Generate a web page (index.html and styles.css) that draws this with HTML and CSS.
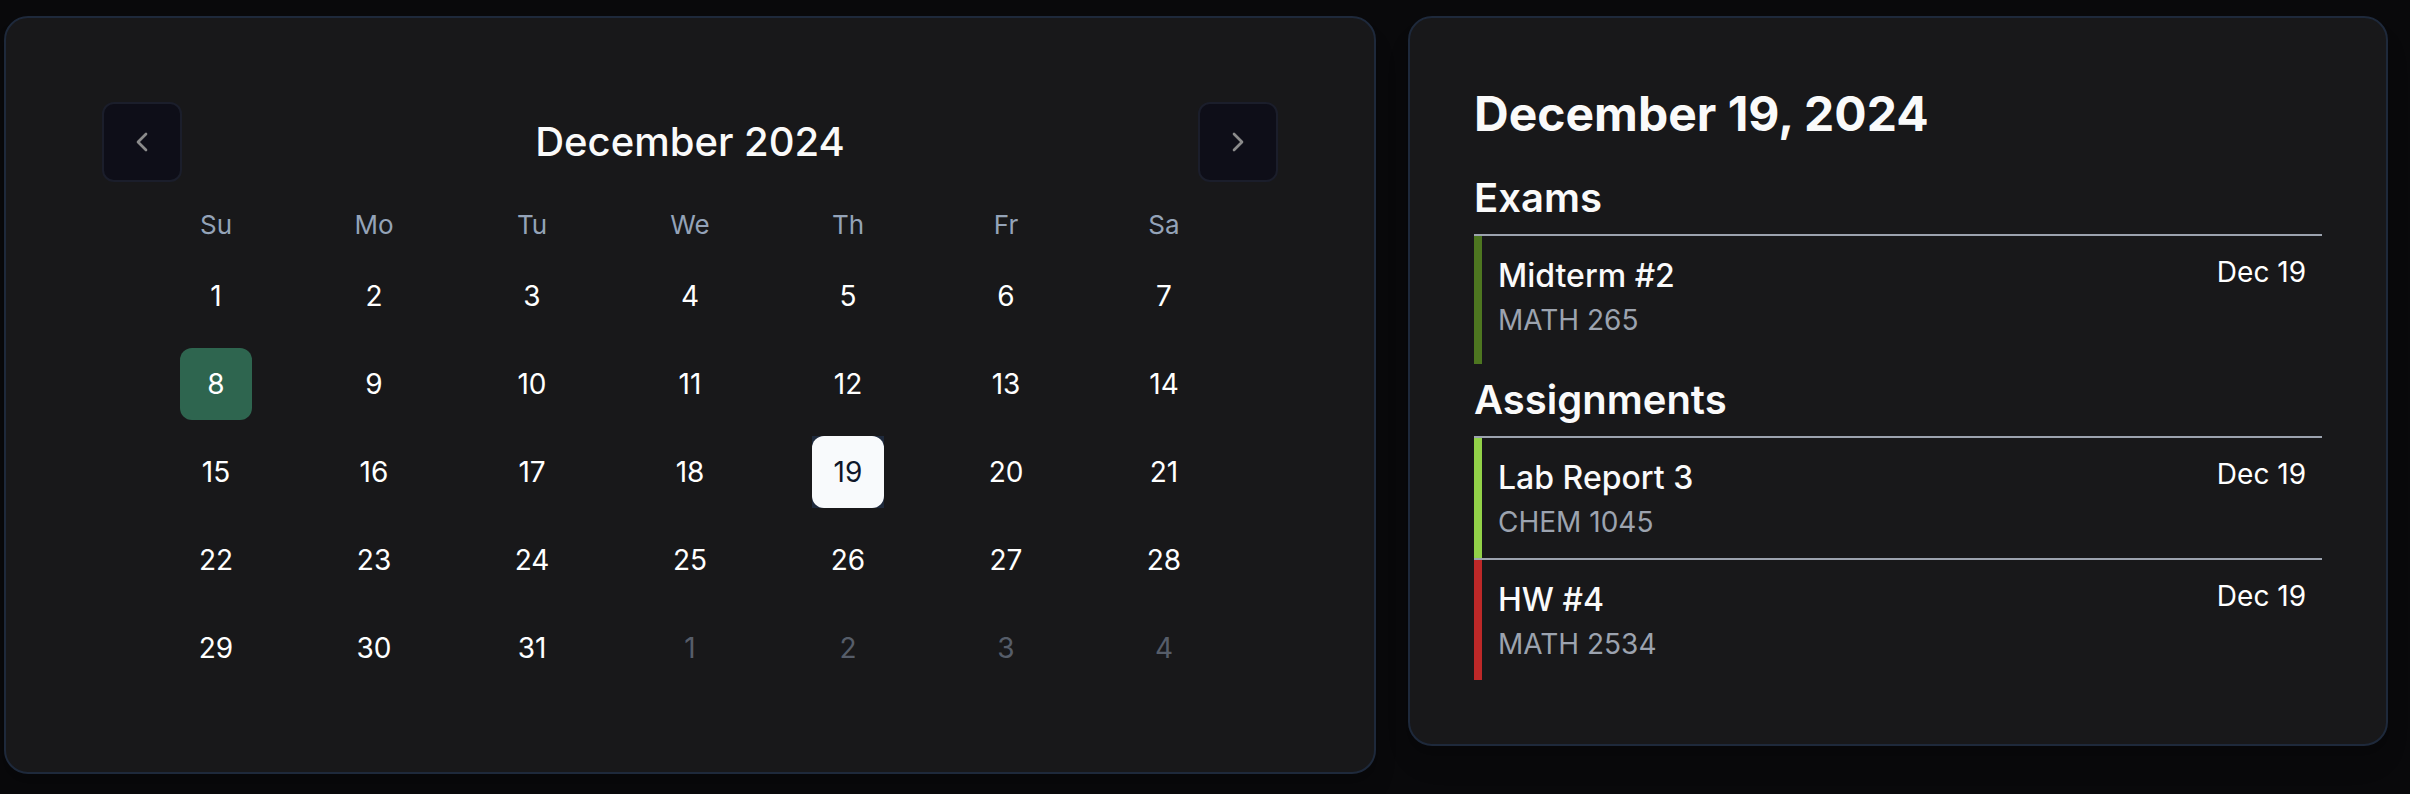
FILE: index.html
```html
<!DOCTYPE html>
<html lang="en">
<head>
<meta charset="utf-8">
<meta name="viewport" content="width=device-width, initial-scale=1">
<title>December 2024</title>
<link rel="stylesheet" href="styles.css">
</head>
<body>
<main class="layout">
  <section class="card calendar" aria-label="Calendar">
    <header class="calendar-header">
      <button class="nav-button" type="button" aria-label="Previous month">
        <svg class="nav-icon" viewBox="0 0 24 24" aria-hidden="true"><path d="m15 18-6-6 6-6"/></svg>
      </button>
      <h2 class="calendar-title">December 2024</h2>
      <button class="nav-button" type="button" aria-label="Next month">
        <svg class="nav-icon" viewBox="0 0 24 24" aria-hidden="true"><path d="m9 18 6-6-6-6"/></svg>
      </button>
    </header>
    <div class="calendar-body">
      <table class="month">
        <thead>
          <tr><th scope="col">Su</th><th scope="col">Mo</th><th scope="col">Tu</th><th scope="col">We</th><th scope="col">Th</th><th scope="col">Fr</th><th scope="col">Sa</th></tr>
        </thead>
        <tbody>
          <tr>
            <td><button class="day" type="button">1</button></td>
            <td><button class="day" type="button">2</button></td>
            <td><button class="day" type="button">3</button></td>
            <td><button class="day" type="button">4</button></td>
            <td><button class="day" type="button">5</button></td>
            <td><button class="day" type="button">6</button></td>
            <td><button class="day" type="button">7</button></td>
          </tr>
          <tr>
            <td><button class="day today" type="button">8</button></td>
            <td><button class="day" type="button">9</button></td>
            <td><button class="day" type="button">10</button></td>
            <td><button class="day" type="button">11</button></td>
            <td><button class="day" type="button">12</button></td>
            <td><button class="day" type="button">13</button></td>
            <td><button class="day" type="button">14</button></td>
          </tr>
          <tr>
            <td><button class="day" type="button">15</button></td>
            <td><button class="day" type="button">16</button></td>
            <td><button class="day" type="button">17</button></td>
            <td><button class="day" type="button">18</button></td>
            <td><div class="selected-cell"><button class="day selected" type="button" aria-pressed="true">19</button></div></td>
            <td><button class="day" type="button">20</button></td>
            <td><button class="day" type="button">21</button></td>
          </tr>
          <tr>
            <td><button class="day" type="button">22</button></td>
            <td><button class="day" type="button">23</button></td>
            <td><button class="day" type="button">24</button></td>
            <td><button class="day" type="button">25</button></td>
            <td><button class="day" type="button">26</button></td>
            <td><button class="day" type="button">27</button></td>
            <td><button class="day" type="button">28</button></td>
          </tr>
          <tr>
            <td><button class="day" type="button">29</button></td>
            <td><button class="day" type="button">30</button></td>
            <td><button class="day" type="button">31</button></td>
            <td><button class="day outside" type="button">1</button></td>
            <td><button class="day outside" type="button">2</button></td>
            <td><button class="day outside" type="button">3</button></td>
            <td><button class="day outside" type="button">4</button></td>
          </tr>
        </tbody>
      </table>
    </div>
  </section>

  <section class="card agenda">
    <h1 class="agenda-title">December 19, 2024</h1>
    <h2 class="agenda-heading">Exams</h2>
    <ul class="items exams">
      <li class="item">
        <div class="item-body green">
          <div class="item-text">
            <h3 class="item-name">Midterm #2</h3>
            <p class="item-course">MATH 265</p>
          </div>
          <time class="item-date" datetime="2024-12-19">Dec 19</time>
        </div>
      </li>
    </ul>
    <h2 class="agenda-heading">Assignments</h2>
    <ul class="items">
      <li class="item">
        <div class="item-body lime">
          <div class="item-text">
            <h3 class="item-name">Lab Report 3</h3>
            <p class="item-course">CHEM 1045</p>
          </div>
          <time class="item-date" datetime="2024-12-19">Dec 19</time>
        </div>
      </li>
      <li class="item">
        <div class="item-body red">
          <div class="item-text">
            <h3 class="item-name">HW #4</h3>
            <p class="item-course">MATH 2534</p>
          </div>
          <time class="item-date" datetime="2024-12-19">Dec 19</time>
        </div>
      </li>
    </ul>
  </section>
</main>
</body>
</html>
```
FILE: styles.css
```css
* {
  box-sizing: border-box;
}

body {
  margin: 0;
  background: #09090b;
  color: #fafafa;
  font-family: Inter, "Liberation Sans", sans-serif;
  font-size: 28px;
  line-height: 40px;
}

h1, h2, h3, p, ul {
  margin: 0;
  padding: 0;
}

button {
  font: inherit;
  color: inherit;
  padding: 0;
  border: 0;
  background: none;
  cursor: pointer;
}

.layout {
  display: grid;
  grid-template-columns: 7fr 5fr;
  gap: 32px;
  align-items: start;
  padding: 16px 22px 20px 4px;
}

.card {
  min-width: 0;
  border: 2px solid #1e293b;
  border-radius: 24px;
  background: #18181a;
  box-shadow: 0 20px 30px -6px rgba(0, 0, 0, 0.1), 0 8px 12px -8px rgba(0, 0, 0, 0.1);
}

.calendar {
  padding: 84px 96px 88px;
}

.calendar-header {
  display: flex;
  align-items: center;
  justify-content: space-between;
  margin-bottom: 24px;
}

.calendar-title {
  font-size: 40px;
  line-height: 56px;
  font-weight: 500;
}

.nav-button {
  display: flex;
  align-items: center;
  justify-content: center;
  width: 80px;
  height: 80px;
  border: 2px solid #1b1e2b;
  border-radius: 12px;
  background: #0e0e18;
}

.nav-icon {
  width: 32px;
  height: 32px;
  fill: none;
  stroke: #8b8b8b;
  stroke-width: 2;
  stroke-linecap: round;
  stroke-linejoin: round;
}

.calendar-body {
  padding: 0 35px;
}

.month {
  width: 100%;
  table-layout: fixed;
  border-collapse: collapse;
}

.month th {
  padding: 0;
  color: #94a3b8;
  font-size: 26px;
  line-height: 38px;
  font-weight: 400;
}

.month td {
  padding: 16px 0 0;
}

.day {
  display: block;
  width: 72px;
  height: 72px;
  margin: 0 auto;
  border-radius: 12px;
  color: #fff;
}

.today {
  background: #2e654f;
}

.selected-cell {
  width: 72px;
  margin: 0 auto;
  background: #1e293b;
}

.selected {
  background: #f8fafc;
  color: #0f172a;
}

.outside {
  color: #565d69;
}

.agenda {
  padding: 64px;
}

.agenda-title {
  margin-bottom: 16px;
  font-size: 48px;
  line-height: 64px;
  font-weight: 700;
}

.agenda-heading {
  font-size: 40px;
  line-height: 72px;
  font-weight: 600;
}

.items {
  list-style: none;
}

.item {
  border-top: 2px solid #9ca3af;
}

.item-body {
  display: flex;
  justify-content: space-between;
  gap: 16px;
  padding: 16px;
  border-left: 8px solid;
}

.exams .item-body {
  padding-bottom: 24px;
}

.green {
  border-color: #4d7620;
}

.lime {
  border-color: #92d148;
}

.red {
  border-color: #bd2828;
}

.item-name {
  font-size: 32px;
  line-height: 48px;
  font-weight: 500;
}

.item-course {
  color: #9ca3af;
}

.item-date {
  color: #fff;
}
```
